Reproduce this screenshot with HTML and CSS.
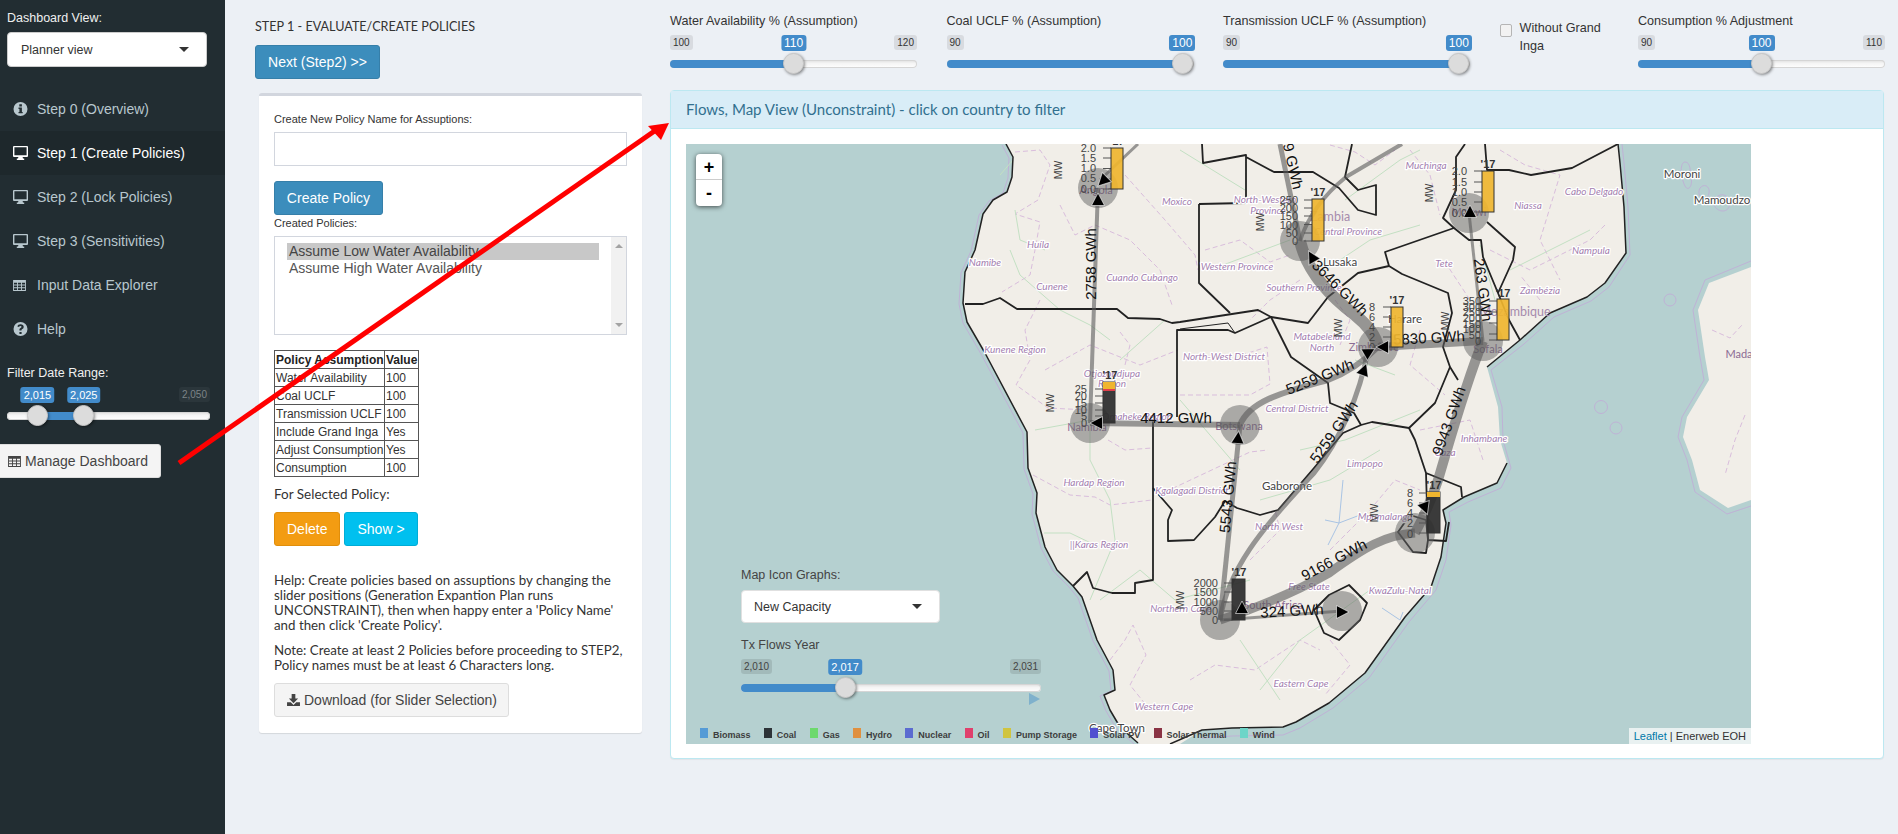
FILE: index.html
```html
<!DOCTYPE html>
<html lang="en">
<head>
<meta charset="utf-8">
<title>Dashboard</title>
<link rel="stylesheet" href="styles.css">
</head>
<body>
<div class="app">
  <aside class="sidebar">
    <div class="side-label first">Dashboard View:</div>
    <div class="select side-select"><span>Planner view</span><i class="caret"></i></div>
    <nav class="menu">
      <a class="item"><svg class="ico" viewBox="0 0 14 14"><path fill-rule="evenodd" d="M7 0a7 7 0 110 14A7 7 0 017 0zM5.800 2.200v2.200h2.600V2.200zM5 5.600v1.300h.9v3H5v1.300h4.200v-1.300h-.8V5.600z"/></svg>Step 0 (Overview)</a>
      <a class="item active"><svg class="ico" viewBox="0 0 15 14"><path fill-rule="evenodd" d="M1 0h13a1 1 0 011 1v9a1 1 0 01-1 1H9.600l.4 1.600h1.200V14H3.800v-1.400H5l.4-1.600H1a1 1 0 01-1-1V1a1 1 0 011-1zm.4 1.300v7.900h12.200V1.300z"/></svg>Step 1 (Create Policies)</a>
      <a class="item"><svg class="ico" viewBox="0 0 15 14"><path fill-rule="evenodd" d="M1 0h13a1 1 0 011 1v9a1 1 0 01-1 1H9.600l.4 1.600h1.200V14H3.800v-1.400H5l.4-1.600H1a1 1 0 01-1-1V1a1 1 0 011-1zm.4 1.300v7.900h12.200V1.300z"/></svg>Step 2 (Lock Policies)</a>
      <a class="item"><svg class="ico" viewBox="0 0 15 14"><path fill-rule="evenodd" d="M1 0h13a1 1 0 011 1v9a1 1 0 01-1 1H9.600l.4 1.600h1.200V14H3.800v-1.400H5l.4-1.600H1a1 1 0 01-1-1V1a1 1 0 011-1zm.4 1.300v7.900h12.200V1.300z"/></svg>Step 3 (Sensitivities)</a>
      <a class="item"><svg class="ico tbl" viewBox="0 0 14 12"><path fill-rule="evenodd" d="M0 0h14v12H0zM1 3v2h3.300V3zm4.300 0v2h3.400V3zm4.400 0v2H13V3zM1 6v2h3.300V6zm4.300 0v2h3.400V6zm4.400 0v2H13V6zM1 9v2h3.300V9zm4.300 0v2h3.400V9zm4.400 0v2H13V9z"/></svg>Input Data Explorer</a>
      <a class="item"><svg class="ico" viewBox="0 0 14 14"><path fill-rule="evenodd" d="M7 0a7 7 0 110 14A7 7 0 017 0zM5.900 10.100v1.900h2.200v-1.900zM7 2.200c-1.700 0-2.800.8-3.100 2.200l1.600.6c.2-.7.700-1.100 1.400-1.100.7 0 1.100.3 1.100.8 0 .5-.4.800-1 1.200-.8.5-1.100 1-1.100 2v.7h2.100v-.4c0-.5.2-.7.800-1.100.9-.6 1.400-1.300 1.400-2.400 0-1.500-1.200-2.500-3.200-2.500z"/></svg>Help</a>
    </nav>
    <div class="side-label range">Filter Date Range:</div>
    <div class="sl sl-side">
      <span class="chip max dark">2,050</span>
      <span class="chip val mid" style="left:15%">2,015</span>
      <span class="chip val mid" style="left:37.800%">2,025</span>
      <div class="track"><div class="fill" style="left:15%;width:22.800%"></div></div>
      <span class="thumb" style="left:15%"></span>
      <span class="thumb" style="left:37.800%"></span>
    </div>
    <button class="btn btn-default manage"><svg class="btn-ico" viewBox="0 0 14 12"><path fill-rule="evenodd" d="M0 0h14v12H0zM1 3v2h3.300V3zm4.300 0v2h3.400V3zm4.400 0v2H13V3zM1 6v2h3.300V6zm4.300 0v2h3.400V6zm4.400 0v2H13V6zM1 9v2h3.300V9zm4.300 0v2h3.400V9zm4.400 0v2H13V9z"/></svg>Manage Dashboard</button>
  </aside>

  <main class="main">
    <section class="left-col">
      <h4 class="step">STEP 1 - EVALUATE/CREATE POLICIES</h4>
      <button class="btn btn-primary next">Next (Step2) &gt;&gt;</button>
      <div class="panel">
        <label class="small-label">Create New Policy Name for Assuptions:</label>
        <div class="input"></div>
        <button class="btn btn-primary create">Create Policy</button>
        <label class="small-label">Created Policies:</label>
        <div class="listbox">
          <div class="options">
            <div class="opt selected">Assume Low Water Availability</div>
            <div class="opt">Assume High Water Availability</div>
          </div>
          <div class="scrollbar"><i class="up"></i><i class="down"></i></div>
        </div>
        <table class="policy">
          <tr><th>Policy Assumption</th><th>Value</th></tr>
          <tr><td>Water Availability</td><td>100</td></tr>
          <tr><td>Coal UCLF</td><td>100</td></tr>
          <tr><td>Transmission UCLF</td><td>100</td></tr>
          <tr><td>Include Grand Inga</td><td>Yes</td></tr>
          <tr><td>Adjust Consumption</td><td>Yes</td></tr>
          <tr><td>Consumption</td><td>100</td></tr>
        </table>
        <div class="for-selected">For Selected Policy:</div>
        <div class="actions">
          <button class="btn btn-warning">Delete</button>
          <button class="btn btn-info">Show &gt;</button>
        </div>
        <p class="help first-help">Help: Create policies based on assuptions by changing the slider positions (Generation Expantion Plan runs UNCONSTRAINT), then when happy enter a 'Policy Name' and then click 'Create Policy'.</p>
        <p class="help">Note: Create at least 2 Policies before proceeding to STEP2, Policy names must be at least 6 Characters long.</p>
        <button class="btn btn-default download"><svg class="btn-ico dl" viewBox="0 0 14 13"><path d="M5 0h4v5h3L7 10 2 5h3z"/><path d="M0 9h4l3 3 3-3h4v4H0z"/></svg>Download (for Slider Selection)</button>
      </div>
    </section>

    <section class="right-col">
      <div class="controls">
        <div class="ctl">
          <div class="ctl-label">Water Availability % (Assumption)</div>
          <div class="sl sl-top">
            <span class="chip min">100</span><span class="chip max">120</span>
            <span class="chip val mid" style="left:50%">110</span>
            <div class="track"><div class="fill" style="left:0;width:50%"></div></div>
            <span class="thumb" style="left:50%"></span>
          </div>
        </div>
        <div class="ctl">
          <div class="ctl-label">Coal UCLF % (Assumption)</div>
          <div class="sl sl-top">
            <span class="chip min">90</span>
            <span class="chip val mid" style="left:95.500%">100</span>
            <div class="track"><div class="fill" style="left:0;width:95.500%"></div></div>
            <span class="thumb" style="left:95.500%"></span>
          </div>
        </div>
        <div class="ctl">
          <div class="ctl-label">Transmission UCLF % (Assumption)</div>
          <div class="sl sl-top">
            <span class="chip min">90</span>
            <span class="chip val mid" style="left:95.500%">100</span>
            <div class="track"><div class="fill" style="left:0;width:95.500%"></div></div>
            <span class="thumb" style="left:95.500%"></span>
          </div>
        </div>
        <div class="check"><i class="box"></i><span>Without Grand Inga</span></div>
        <div class="ctl">
          <div class="ctl-label">Consumption % Adjustment</div>
          <div class="sl sl-top">
            <span class="chip min">90</span><span class="chip max">110</span>
            <span class="chip val mid" style="left:50%">100</span>
            <div class="track"><div class="fill" style="left:0;width:50%"></div></div>
            <span class="thumb" style="left:50%"></span>
          </div>
        </div>
      </div>

      <div class="box-panel">
        <div class="box-head">Flows, Map View (Unconstraint) - click on country to filter</div>
        <div class="box-body">
          <div class="map">
            <svg class="map-svg" viewBox="686 144 1065 600" width="1065" height="600">
              <defs>
                <polygon id="ar" points="0,-7 6.500,5.500 -6.500,5.500"/>
              </defs>
              <rect class="sea" x="686" y="144" width="1065" height="600"/>
              <g class="coast-halo">
                <path d="M1006 144L1013 157 1012 177 1007 192 993 200 983 214 975 250 965 272 963 303 967 322 985 353 1027 432 1028 468 1037 493 1036 513 1045 547 1057 570 1073 586 1082 597 1097 640 1113 670 1115 690 1104 695 1110 710 1120 727 1138 743"/>
                <path d="M1202 738L1232 736 1283 735 1300 728 1333 708 1369 678 1409 622 1436 590 1446 560 1451 525 1449 512 1468 502 1501 488 1511 468 1503 440 1502 407 1491 370 1524 344 1554 317 1591 301 1609 287 1630 255 1628 207 1624 163 1622 144"/>
              </g>
              <path class="land" d="M1006 144L1013 157 1012 177 1007 192 993 200 983 214 975 250 965 272 963 303 967 322 985 353 1027 432 1028 468 1037 493 1036 513 1045 547 1057 570 1073 586 1082 597 1097 640 1113 670 1115 690 1104 695 1110 710 1120 727 1138 743 1140 744H1180L1202 730 1232 728 1283 727 1296 722 1329 703 1365 673 1405 617 1431 587 1441 557 1446 523 1443 510 1464 497 1497 483 1507 463 1500 440 1498 407 1487 367 1520 340 1550 313 1587 297 1605 283 1626 253 1624 207 1620 163 1618 144z"/>
              <path class="mada-halo" d="M1751 261L1705 280 1693 310 1700 357 1704 380 1682 417 1678 437 1687 460 1695 492 1727 514 1751 506"/>
              <path class="land" d="M1751 267L1709 283 1698 310 1705 357 1709 380 1687 417 1683 437 1692 460 1700 490 1728 508 1751 500z"/>
              <g class="islands">
                <circle cx="1670" cy="300" r="6"/><circle cx="1601" cy="407" r="6.500"/><circle cx="1616" cy="428" r="6"/>
                <path d="M1685 162c-5 0-5 14 0 24 3 6 8 0 6-8-1-6 0-16-6-16zM1700 188c5-6 12 0 8 8-4 6-12 0-8-8zM1718 196c6-4 14 2 11 11-3 7-14 4-15-3 0-4 1-6 4-8z"/>
              </g>
              <g class="admin">
                <path d="M1015 152L1040 150 1050 165 1038 200 1015 214 1040 222 1035 250 1030 275 1002 292"/>
                <path d="M1060 205L1075 235 1095 225 1130 240 1160 270 1172 305"/>
                <path d="M1125 175L1165 220 1195 255 1198 270"/>
                <path d="M1040 300L1025 330 1030 360 1016 385 1048 408 1088 410"/>
                <path d="M1045 370L1090 345 1140 365 1178 350M1120 332L1130 345 1125 365"/>
                <path d="M1033 475L1070 495 1095 497 1110 505 1152 500M1108 440L1125 450 1152 448"/>
                <path d="M1180 395H1250L1270 384 1267 347 1245 354M1165 492L1250 452 1268 450"/>
                <path d="M1110 660L1125 640 1133 625 1146 655 1130 685 1150 710M1190 680L1215 665 1255 670 1300 640 1320 650"/>
                <path d="M1250 560L1280 530 1275 510M1330 550L1370 510 1395 480 1420 490M1330 640L1350 665 1325 695"/>
                <path d="M1205 250L1240 240 1270 262 1290 255M1330 145L1355 152 1375 165 1395 150M1300 280L1270 300 1250 320"/>
                <path d="M1410 150L1430 175 1440 215M1500 150L1525 165 1560 175 1540 240 1560 280M1490 250L1530 270 1590 240 1605 225M1540 300L1520 275M1445 262L1470 300"/>
                <path d="M1420 330L1410 365 1445 395M1335 300L1350 320 1340 345M1420 430L1470 420 1483 460"/>
                <path d="M1745 415L1735 440 1725 475M1712 330L1730 338 1742 325"/>
              </g>
              <g class="rivers">
                <path d="M1013 160L1000 175M1015 210L1020 240 1045 250M1010 250L1020 275 1060 310 1090 325 1110 340"/>
                <path d="M1035 430L1090 420 1090 460 1110 500 1115 540 1090 600M1120 360L1165 320"/>
                <path d="M1180 400L1240 470M1100 600L1140 570 1175 600 1250 580M1044 533H1070L1095 545"/>
                <path d="M1240 640L1280 700M1370 590L1300 640 1260 690M1260 500L1330 480 1380 450"/>
                <path d="M1345 200L1400 160 1420 150M1215 268L1290 240M1340 260L1370 240 1420 225M1480 245L1495 300"/>
                <path d="M1510 270L1590 230M1180 150L1245 190M1300 450L1345 440 1420 410M1355 360L1395 375"/>
              </g>
              <path class="water" d="M1343 480L1339 523 1328 545M1339 523L1360 515M1339 523L1325 520M1382 608L1400 620 1403 612"/>
              <g class="borders">
                <path class="coastline" d="M1006 144L1013 157 1012 177 1007 192 993 200 983 214 975 250 965 272 963 303 967 322 985 353 1027 432 1028 468 1037 493 1036 513 1045 547 1057 570 1073 586 1082 597 1097 640 1113 670 1115 690 1104 695 1110 710 1120 727 1138 743"/>
                <path class="coastline" d="M1170 744L1202 730 1232 728 1283 727 1296 722 1329 703 1365 673 1405 617 1431 587 1441 557 1446 523 1443 510 1464 497 1497 483 1507 463M1487 367L1520 340 1550 313 1587 297 1605 283 1626 253 1624 207 1620 163 1618 144"/>
                <path d="M965 304L983 304 1000 298 1017 309H1117L1128 318 1160 319 1172 323 1180 322 1258 310 1271 317 1308 323 1328 297 1358 273 1389 266"/>
                <path d="M1153 417V580L1135 583V593L1112 593 1093 588 1087 572 1073 586"/>
                <path d="M1177 417V330H1228L1235 333 1271 317 1291 357 1328 383 1330 403 1354 413 1361 425 1372 422 1409 428 1435 403 1450 367 1443 347 1452 313 1448 293 1402 274 1389 266 1385 252 1454 228 1443 218 1456 190 1456 157 1465 144"/>
                <path d="M1153 488L1172 510 1168 520 1168 541 1194 540 1215 517 1225 501 1237 508 1260 515 1278 510 1314 468 1343 433 1361 425"/>
                <path d="M1409 428L1415 440 1426 473 1461 487 1462 497M1426 473L1428 540 1446 541 1449 522"/>
                <path d="M1410 515L1398 532 1413 552 1426 553 1428 540 1426 520z"/>
                <path d="M1349 585L1367 603 1360 620 1339 640 1324 633 1314 610 1329 595z"/>
                <path d="M1199 204L1246 203V155L1203 163 1202 144M1199 204V283L1230 313M1246 157L1274 172H1313L1339 188 1358 210 1376 215V185L1358 190 1345 177 1352 144"/>
                <path d="M1485 144L1487 170H1509L1531 175 1572 168 1618 144"/>
                <path d="M1454 228L1469 240H1481L1483 257 1498 293 1509 320 1520 340M1487 222L1515 247 1513 260 1498 293M1450 367L1458 380"/>
                <path class="thin" d="M1409 428L1435 403M1180 329L1228 323 1235 333"/>
              </g>
              <g class="labels">
                <text class="r" x="1038" y="248">Huíla</text><text class="r" x="985" y="266">Namibe</text>
                <text class="r" x="1052" y="290">Cunene</text><text class="r" x="1142" y="281">Cuando Cubango</text>
                <text class="r" x="1177" y="205">Moxico</text><text class="r" x="1015" y="353">Kunene Region</text>
                <text class="r" x="1112" y="377">Otjozondjupa</text><text class="r" x="1112" y="387">Region</text>
                <text class="r" x="1137" y="420">Omaheke Region</text><text class="r" x="1094" y="486">Hardap Region</text>
                <text class="r" x="1099" y="548">||Karas Region</text><text class="r" x="1181" y="612">Northern Cape</text>
                <text class="r" x="1164" y="710">Western Cape</text><text class="r" x="1301" y="687">Eastern Cape</text>
                <text class="r" x="1309" y="590">Free State</text><text class="r" x="1400" y="594">KwaZulu-Natal</text>
                <text class="r" x="1385" y="520">Mpumalanga</text><text class="r" x="1279" y="530">North West</text>
                <text class="r" x="1192" y="494">Kgalagadi District</text><text class="r" x="1365" y="467">Limpopo</text>
                <text class="r" x="1445" y="456">Gaza</text><text class="r" x="1484" y="442">Inhambane</text>
                <text class="r" x="1297" y="412">Central District</text><text class="r" x="1224" y="360">North-West District</text>
                <text class="r" x="1322" y="340">Matabeleland</text><text class="r" x="1322" y="351">North</text>
                <text class="r" x="1304" y="291">Southern Province</text><text class="r" x="1237" y="270">Western Province</text>
                <text class="r" x="1265" y="203">North-Western</text><text class="r" x="1268" y="214">Province</text>
                <text class="r" x="1348" y="235">Central Province</text><text class="r" x="1426" y="169">Muchinga</text>
                <text class="r" x="1444" y="267">Tete</text><text class="r" x="1528" y="209">Niassa</text>
                <text class="r" x="1594" y="195">Cabo Delgado</text><text class="r" x="1591" y="254">Nampula</text>
                <text class="r" x="1540" y="294">Zambézia</text>
                <text class="c" x="1096" y="194">Angola</text><text class="c" x="1087" y="431">Namibia</text>
                <text class="c big" x="1330" y="221">Zambia</text><text class="c" x="1469" y="216">Malawi</text>
                <text class="c big" x="1515" y="316">Mozambique</text><text class="c" x="1488" y="353">Sofala</text>
                <text class="c" x="1374" y="351">Zimbabwe</text><text class="c" x="1239" y="430">Botswana</text>
                <text class="c" x="1273" y="609">South Africa</text><text class="c" x="1739" y="358">Mada</text>
                <text class="t" x="1340" y="266">Lusaka</text><text class="t" x="1405" y="323">Harare</text>
                <text class="t" x="1287" y="490">Gaborone</text><text class="t" x="1117" y="732">Cape Town</text>
                <text class="t" x="1682" y="178">Moroni</text><text class="t" x="1722" y="204">Mamoudzo</text>
              </g>
              <g class="nodes">
                <circle cx="1098" cy="188" r="20"/><circle cx="1090" cy="423" r="20"/><circle cx="1300" cy="241" r="20"/>
                <circle cx="1469" cy="213" r="20"/><circle cx="1378" cy="347" r="20"/><circle cx="1483" cy="341" r="20"/>
                <circle cx="1240" cy="425" r="20"/><circle cx="1220" cy="620" r="20"/><circle cx="1342" cy="611" r="20"/>
                <circle cx="1415" cy="533" r="20"/>
              </g>
              <g class="flows">
                <path class="w4" d="M1098 188L1090 423"/>
                <path class="w3" d="M1100 180L1138 144"/>
                <path class="w5" d="M1280 144L1300 241"/>
                <path class="w4" d="M1300 241C1310 210 1330 190 1346 177L1402 144"/>
                <path class="w12" d="M1300 241C1308 275 1335 300 1355 315 1370 327 1376 337 1378 347"/>
                <path class="w8" d="M1378 347L1483 341"/>
                <path class="w6" d="M1240 425C1250 400 1285 392 1328 380 1350 372 1365 360 1378 347"/>
                <path class="w6" d="M1090 423L1240 425"/>
                <path class="w5" d="M1220 620C1228 570 1260 530 1314 473 1340 440 1360 395 1368 350"/>
                <path class="w5" d="M1220 620L1240 425"/>
                <path class="w3" d="M1220 620L1342 611"/>
                <path class="w9" d="M1220 620C1250 610 1290 595 1329 573 1365 547 1385 535 1415 533"/>
                <path class="w10" d="M1483 341C1465 385 1450 440 1438 480 1430 505 1422 520 1415 533"/>
                <path class="w3" d="M1469 213L1483 341"/>
              </g>
              <g class="flow-labels">
                <text transform="translate(1091 264) rotate(-90)" y="5">2758 GWh</text>
                <text transform="translate(1290 154) rotate(77)" y="5">1649 GWh</text>
                <text transform="translate(1340 288) rotate(45)" y="5">3646 GWh</text>
                <text transform="translate(1429 338) rotate(-3)" y="5">5830 GWh</text>
                <text transform="translate(1176 418)" y="5">4412 GWh</text>
                <text transform="translate(1320 377) rotate(-22)" y="5">5259 GWh</text>
                <text transform="translate(1334 432) rotate(-55)" y="5">5259 GWh</text>
                <text transform="translate(1228 497) rotate(-85)" y="5">5543 GWh</text>
                <text transform="translate(1292 611) rotate(-3)" y="5">324 GWh</text>
                <text transform="translate(1334 560) rotate(-28)" y="5">9166 GWh</text>
                <text transform="translate(1449 421) rotate(-70)" y="5">9943 GWh</text>
                <text transform="translate(1483 290) rotate(82)" y="5">263 GWh</text>
              </g>
              <g class="charts">
                <g transform="translate(1111 189)">
                  <path class="tick" d="M-8 -41H0M-8 -31H0M-8 -20.500H0M-8 -10H0M-8 0H0"/>
                  <rect class="bar yellow" x="0" y="-41" width="12" height="41"/>
                  <text class="tk" x="-15" y="-37">2.0</text><text class="tk" x="-15" y="-27">1.5</text><text class="tk" x="-15" y="-17">1.0</text><text class="tk" x="-15" y="-7">0.5</text><text class="tk" x="-15" y="4">0.0</text>
                  <text class="mw" transform="translate(-49 -19) rotate(-90)">MW</text>
                  <text class="yr" x="6" y="-44">'17</text>
                </g>
                <g transform="translate(1312 241)">
                  <path class="tick" d="M-8 -41H0M-8 -33H0M-8 -25H0M-8 -16.500H0M-8 -8H0M-8 0H0"/>
                  <rect class="bar yellow" x="0" y="-42" width="12" height="42"/>
                  <text class="tk" x="-14" y="-37">250</text><text class="tk" x="-14" y="-29">200</text><text class="tk" x="-14" y="-21">150</text><text class="tk" x="-14" y="-12.500">100</text><text class="tk" x="-14" y="-4">50</text><text class="tk" x="-14" y="4">0</text>
                  <text class="mw" transform="translate(-48 -19) rotate(-90)">MW</text>
                  <text class="yr" x="6" y="-45">'17</text>
                </g>
                <g transform="translate(1482 212)">
                  <path class="tick" d="M-8 -41H0M-8 -30H0M-8 -20H0M-8 -10H0M-8 0H0"/>
                  <rect class="bar yellow" x="0" y="-41" width="12" height="41"/>
                  <text class="tk" x="-15" y="-37">2.0</text><text class="tk" x="-15" y="-26">1.5</text><text class="tk" x="-15" y="-16">1.0</text><text class="tk" x="-15" y="-6">0.5</text><text class="tk" x="-15" y="5">0.0</text>
                  <text class="mw" transform="translate(-49 -19) rotate(-90)">MW</text>
                  <text class="yr" x="6" y="-44">'17</text>
                </g>
                <g transform="translate(1391 347)">
                  <path class="tick" d="M-8 -40H0M-8 -30H0M-8 -20H0M-8 -10H0M-8 0H0"/>
                  <rect class="bar yellow" x="0" y="-40" width="12" height="40"/>
                  <text class="tk" x="-16" y="-36">8</text><text class="tk" x="-16" y="-26">6</text><text class="tk" x="-16" y="-16">4</text><text class="tk" x="-16" y="-6">2</text><text class="tk" x="-16" y="4">0</text>
                  <text class="mw" transform="translate(-49 -19) rotate(-90)">MW</text>
                  <text class="yr" x="6" y="-43">'17</text>
                </g>
                <g transform="translate(1497 340)">
                  <path class="tick" d="M-8 -39H0M-8 -28H0M-8 -17H0M-8 -6H0M-8 0H0"/>
                  <rect class="bar yellow" x="0" y="-41" width="12" height="41"/>
                  <text class="tk" x="-16" y="-35">350</text><text class="tk" x="-16" y="-29">300</text><text class="tk" x="-16" y="-24">250</text><text class="tk" x="-16" y="-18">200</text><text class="tk" x="-16" y="-12">150</text><text class="tk" x="-16" y="-7">100</text><text class="tk" x="-16" y="-1">50</text><text class="tk" x="-16" y="5">0</text>
                  <text class="mw" transform="translate(-48 -19) rotate(-90)">MW</text>
                  <text class="yr" x="6" y="-43">'17</text>
                </g>
                <g transform="translate(1103 423)">
                  <path class="tick" d="M-8 -34H0M-8 -27H0M-8 -20H0M-8 -13H0M-8 -7H0M-8 0H0"/>
                  <rect class="bar black" x="0" y="-41" width="12" height="41"/>
                  <rect class="seg-y" x="0" y="-41" width="12" height="7"/>
                  <rect class="seg-r" x="0" y="-34" width="12" height="2"/>
                  <text class="tk" x="-16" y="-30">25</text><text class="tk" x="-16" y="-23">20</text><text class="tk" x="-16" y="-16">15</text><text class="tk" x="-16" y="-9">10</text><text class="tk" x="-16" y="-3">5</text><text class="tk" x="-16" y="4">0</text>
                  <text class="mw" transform="translate(-49 -20) rotate(-90)">MW</text>
                  <text class="yr" x="7" y="-44">'17</text>
                </g>
                <g transform="translate(1232 620)">
                  <path class="tick" d="M-8 -37H0M-8 -28H0M-8 -18H0M-8 -9H0M-8 0H0"/>
                  <rect class="bar black" x="0" y="-41" width="13" height="41"/>
                  <text class="tk" x="-14" y="-33">2000</text><text class="tk" x="-14" y="-24">1500</text><text class="tk" x="-14" y="-14">1000</text><text class="tk" x="-14" y="-5">500</text><text class="tk" x="-14" y="4">0</text>
                  <text class="mw" transform="translate(-48 -20) rotate(-90)">MW</text>
                  <text class="yr" x="7" y="-44">'17</text>
                </g>
                <g transform="translate(1427 533)">
                  <path class="tick" d="M-8 -40H0M-8 -30H0M-8 -20H0M-8 -10H0M-8 0H0"/>
                  <rect class="bar black" x="0" y="-41" width="13" height="41"/>
                  <rect class="seg-y" x="0" y="-41" width="13" height="5"/>
                  <text class="tk" x="-14" y="-36">8</text><text class="tk" x="-14" y="-26">6</text><text class="tk" x="-14" y="-16">4</text><text class="tk" x="-14" y="-6">2</text><text class="tk" x="-14" y="5">0</text>
                  <text class="mw" transform="translate(-49 -20) rotate(-90)">MW</text>
                  <text class="yr" x="7" y="-44">'17</text>
                </g>
              </g>
              <g class="arrows">
                <use href="#ar" transform="translate(1098 200)"/>
                <use href="#ar" transform="translate(1103 181) rotate(225)"/>
                <use href="#ar" transform="translate(1097 423) rotate(-90)"/>
                <use href="#ar" transform="translate(1312 257) rotate(-30)"/>
                <use href="#ar" transform="translate(1470 212)"/>
                <use href="#ar" transform="translate(1369 352) rotate(60)"/>
                <use href="#ar" transform="translate(1383 347) rotate(-90)"/>
                <use href="#ar" transform="translate(1364 370) rotate(20)"/>
                <use href="#ar" transform="translate(1238 438) rotate(5)"/>
                <use href="#ar" transform="translate(1242 608)"/>
                <use href="#ar" transform="translate(1342 612) rotate(90)"/>
                <use href="#ar" transform="translate(1425 508) rotate(160)"/>
              </g>
            </svg>

            <div class="zoom-ctl"><a class="zoom-btn">+</a><a class="zoom-btn">-</a></div>

            <div class="map-panel">
              <div class="over-label">Map Icon Graphs:</div>
              <div class="select map-select"><span>New Capacity</span><i class="caret"></i></div>
              <div class="over-label tx">Tx Flows Year</div>
              <div class="sl sl-over">
                <span class="chip min">2,010</span><span class="chip max">2,031</span>
                <span class="chip val mid" style="left:34.700%">2,017</span>
                <div class="track"><div class="fill" style="left:0;width:34.700%"></div></div>
                <span class="thumb" style="left:34.700%"></span>
                <i class="play"></i>
              </div>
            </div>

            <div class="legend">
              <span class="lg"><i class="sw s-biomass"></i>Biomass</span>
              <span class="lg"><i class="sw s-coal"></i>Coal</span>
              <span class="lg"><i class="sw s-gas"></i>Gas</span>
              <span class="lg"><i class="sw s-hydro"></i>Hydro</span>
              <span class="lg"><i class="sw s-nuclear"></i>Nuclear</span>
              <span class="lg"><i class="sw s-oil"></i>Oil</span>
              <span class="lg"><i class="sw s-pump"></i>Pump Storage</span>
              <span class="lg"><i class="sw s-pv"></i>Solar PV</span>
              <span class="lg"><i class="sw s-thermal"></i>Solar Thermal</span>
              <span class="lg"><i class="sw s-wind"></i>Wind</span>
            </div>

            <div class="attribution"><a class="leaflet">Leaflet</a> | Enerweb EOH</div>
          </div>
        </div>
      </div>
    </section>
  </main>

  <svg class="red-arrow" viewBox="0 0 1898 834" width="1898" height="834">
    <path class="red-line" d="M179 463L656 130"/>
    <polygon class="red-head" points="669,123 648,126 661,140"/>
  </svg>
</div>
</body>
</html>
```

FILE: styles.css
```css
* { box-sizing: border-box; }
html, body { margin: 0; height: 100%; overflow: hidden; }
body { font-family: "Liberation Sans", Arial, sans-serif; font-size: 14px; color: #333; background: #ecf0f5; }
.app { position: relative; display: flex; height: 834px; }
.red-arrow { position: absolute; left: 0; top: 0; pointer-events: none; }
.red-line { stroke: #f00; stroke-width: 5; fill: none; }
.red-head { fill: #f00; }

.sidebar { width: 225px; flex: none; background: #222d32; overflow: hidden; padding-top: 10px; }
.side-label { font-size: 12.500px; line-height: 16px; color: #f0f0f0; padding-left: 7px; }
.select { display: flex; align-items: center; justify-content: space-between; background: #fff; border: 1px solid #ccc; border-radius: 4px; font-size: 12.500px; color: #333; }
.side-select { width: 200px; height: 35px; margin: 6px 0 0 7px; padding: 0 17px 0 13px; }
.caret { width: 0; height: 0; border-left: 5px solid transparent; border-right: 5px solid transparent; border-top: 5px solid #333; }
.menu { margin-top: 20px; display: flex; flex-direction: column; }
.item { display: flex; align-items: center; height: 44px; padding-left: 13px; color: #b8c7ce; font-size: 14px; }
.item.active { background: #1e282c; color: #fff; }
.ico { width: 15px; height: 14px; margin-right: 9px; fill: currentColor; flex: none; }
.ico.tbl { width: 13px; height: 11px; margin-right: 11px; }
.range { margin-top: 14px; }

.sl { position: relative; height: 42px; }
.track { position: absolute; left: 0; right: 0; top: 25px; height: 8px; border-radius: 4px; background: linear-gradient(#ddd, #f4f4f4 40%, #fff); box-shadow: inset 0 0 0 1px #d5d5d5; }
.fill { position: absolute; top: 0; bottom: 0; background: #428bca; border-radius: 4px; }
.thumb { position: absolute; top: 18px; width: 21px; height: 21px; margin-left: -10.500px; border-radius: 50%; background: #dcdcdc; border: 1px solid #c8c8c8; box-shadow: 1px 1px 3px rgba(0, 0, 0, .45); }
.chip { position: absolute; top: 0; font-size: 10px; line-height: 15px; padding: 0 3px; border-radius: 3px; background: #d8dbe0; color: #333; white-space: nowrap; }
.chip.min { left: 0; }
.chip.max { right: 0; }
.chip.val { background: #428bca; color: #fff; font-size: 12px; line-height: 16px; }
.chip.mid { transform: translateX(-50%); }
.sl-side { width: 203px; margin: 6px 0 0 7px; }
.sl-side .chip.val, .sl-over .chip.val { font-size: 11px; }
.chip.dark { background: #2b363b; color: #7c8488; }
.btn { display: inline-block; height: 34px; padding: 0 12px; border: 1px solid transparent; border-radius: 3px; font-family: inherit; font-size: 14px; line-height: 32px; white-space: nowrap; }
.btn-primary { background: #3c8dbc; border-color: #367fa9; color: #fff; }
.btn-default { background: #f4f4f4; border-color: #ddd; color: #444; }
.btn-warning { background: #f39c12; border-color: #e08e0b; color: #fff; }
.btn-info { background: #00c0ef; border-color: #00acd6; color: #fff; }
.btn-ico { width: 13px; height: 11px; margin-right: 4px; fill: #444; vertical-align: -1px; }
.btn-ico.dl { height: 12px; }
.manage { display: block; margin: 15px 0 0 -6px; width: 167px; padding-left: 13px; text-align: left; }

.main { flex: 1; display: flex; padding-left: 30px; }
.left-col { width: 387px; flex: none; padding-top: 19px; }
.step { margin: 0; font-family: Lato, "Noto Sans", sans-serif; font-weight: 400; font-size: 12.600px; line-height: 16px; color: #333; }
.next { display: block; margin-top: 10px; width: 125px; padding: 0; }
.panel { margin: 14px 0 0 4px; width: 383px; height: 640px; background: #fff; border-top: 3px solid #d2d6de; border-radius: 3px; box-shadow: 0 1px 1px rgba(0, 0, 0, .1); padding: 15px 15px 0; }
.small-label { display: block; font-size: 11px; line-height: 16px; color: #333; }
.input { height: 34px; margin-top: 5px; width: 353px; border: 1px solid #d2d6de; background: #fff; }
.create { display: block; margin-top: 15px; width: 109px; padding: 0; }
.listbox { display: flex; justify-content: space-between; width: 353px; height: 99px; margin-top: 5px; border: 1px solid #d2d6de; }
.options { padding: 6px 0 0 12px; }
.opt { width: 312px; height: 17px; line-height: 17px; padding-left: 2px; font-size: 14px; color: #555; }
.opt.selected { background: #c8c8c8; color: #444; }
.scrollbar { width: 15px; background: #f1f1f1; display: flex; flex-direction: column; justify-content: space-between; align-items: center; padding: 7px 0; }
.scrollbar i { width: 0; height: 0; border-left: 4px solid transparent; border-right: 4px solid transparent; }
.scrollbar .up { border-bottom: 4px solid #a3a3a3; }
.scrollbar .down { border-top: 4px solid #a3a3a3; }
.policy { margin-top: 15px; border-collapse: collapse; border: 1.500px solid #333; font-size: 12px; color: #333; table-layout: fixed; width: 145px; }
.policy th, .policy td { border: 1px solid #555; height: 18px; padding: 0 1px; text-align: left; white-space: nowrap; line-height: 16px; }
.policy th:first-child, .policy td:first-child { width: 110px; }
.policy th { color: #222; }
.for-selected { margin-top: 7px; font-family: Lato, "Noto Sans", sans-serif; font-size: 13.500px; line-height: 20px; color: #333; }
.actions { display: flex; gap: 4px; margin-top: 8px; }
.actions .btn { padding: 0 12px; }
.help { margin: 10px 0 0; width: 353px; font-family: Lato, "Noto Sans", sans-serif; font-size: 13.300px; line-height: 15px; color: #333; }
.first-help { margin-top: 27px; }
.download { display: block; margin-top: 10px; width: 235px; }

.right-col { width: 1214px; margin-left: 28px; flex: none; padding-top: 13px; }
.controls { display: grid; grid-template-columns: 247px 247px 247px 109px 247px; column-gap: 29.500px; height: 77px; }
.ctl-label { font-size: 12.600px; line-height: 16px; color: #333; white-space: nowrap; }
.sl-top { margin-top: 6px; }
.check { display: flex; gap: 8px; padding-top: 6px; font-size: 12.600px; line-height: 18px; color: #333; }
.box { flex: none; width: 12px; height: 13px; margin-top: 5px; border: 1px solid #b5b5b5; border-radius: 2px; background: #f2f2f2; }

.box-panel { height: 669px; background: #fff; border: 1px solid #bce8f1; border-radius: 4px; box-shadow: 0 1px 1px rgba(0, 0, 0, .05); }
.box-head { height: 38px; background: #d9edf7; border-bottom: 1px solid #bce8f1; padding-left: 15px; font-family: Lato, "Noto Sans", sans-serif; font-size: 15.050px; line-height: 37px; color: #31708f; }
.box-body { padding: 15px; }
.map { position: relative; width: 1065px; height: 600px; overflow: hidden; background: #b5d0d0; }
.map-svg { display: block; }
.sea { fill: #b5d0d0; }
.land { fill: #f1eee8; }
.coast-halo path, .mada-halo { fill: none; stroke: #bfb2d6; stroke-width: 1; }
.coast-halo path:first-child { transform: translate(-4px, 1px); }
.islands { fill: none; stroke: #bfb2d6; stroke-width: 1; }
.admin path { fill: none; stroke: #d9bddc; stroke-width: 1; stroke-dasharray: 5 3; }
.rivers path { fill: none; stroke: #c3e0c3; stroke-width: 1; }
.water { fill: none; stroke: #a9c4e4; stroke-width: 1; }
.borders path { fill: none; stroke: #222; stroke-width: 1.800; stroke-linejoin: round; }
.borders .coastline { stroke-width: 1.500; }
.borders .thin { stroke-width: 1; }
.r, .c, .t { text-anchor: middle; font-family: Lato, "Noto Sans", sans-serif; paint-order: stroke; stroke: #fff; stroke-width: 2.500px; stroke-linejoin: round; }
.r { font-size: 10px; font-style: italic; fill: #a47fb0; }
.c { font-size: 11px; fill: #8b6b94; stroke: none; }
.c.big { font-size: 12.500px; fill: #a68bad; }
.t { font-size: 11.500px; fill: #444; }
.nodes circle { fill: rgba(100, 100, 100, .5); }
.flows path { fill: none; stroke: rgba(90, 90, 90, .6); }
.w3 { stroke-width: 3; }
.w4 { stroke-width: 4; }
.w5 { stroke-width: 5; }
.w6 { stroke-width: 6; }
.w8 { stroke-width: 8; }
.w9 { stroke-width: 9; }
.w10 { stroke-width: 10; }
.w12 { stroke-width: 12; }
.flow-labels text { font-family: "Liberation Sans", Arial, sans-serif; font-size: 15px; fill: #111; text-anchor: middle; }
.tick { fill: none; stroke: #555; stroke-width: 1; }
.bar { stroke: #333; stroke-width: 1; }
.yellow { fill: #efb52f; fill-opacity: .92; }
.black { fill: #2b2b2b; fill-opacity: .92; }
.seg-y { fill: #efb52f; }
.seg-r { fill: #e0404c; }
.tk { font-family: "Liberation Sans", Arial, sans-serif; font-size: 11px; fill: #444; text-anchor: end; }
.mw { font-family: "Liberation Sans", Arial, sans-serif; font-size: 10.500px; fill: #444; text-anchor: middle; }
.yr { font-family: "Liberation Sans", Arial, sans-serif; font-size: 11px; font-weight: 700; fill: #333; text-anchor: middle; }
.arrows use { fill: #000; stroke: rgba(255, 255, 255, .6); stroke-width: 1; }

.zoom-ctl { position: absolute; left: 10px; top: 10px; width: 26px; border-radius: 4px; background: #fff; box-shadow: 0 1px 5px rgba(0, 0, 0, .65); }
.zoom-btn { display: block; height: 26px; text-align: center; font: 700 18px/26px "Liberation Sans", Arial, sans-serif; color: #000; }
.zoom-btn:first-child { border-bottom: 1px solid #ccc; }

.map-panel { position: absolute; left: 55px; top: 423px; width: 300px; }
.over-label { font-size: 12.500px; line-height: 16px; color: #444; }
.map-select { width: 199px; height: 33px; margin-top: 7px; padding: 0 17px 0 12px; border-color: #e0e0e0; }
.tx { margin-top: 14px; }
.sl-over { margin-top: 6px; height: 50px; }
.sl-over .chip { background: rgba(0, 0, 0, .1); color: #444; }
.sl-over .chip.val { background: #428bca; color: #fff; }
.play { position: absolute; right: 1px; top: 34px; width: 0; height: 0; border-left: 11px solid #7fb1cc; border-top: 6.500px solid transparent; border-bottom: 6.500px solid transparent; }

.legend { position: absolute; left: 14px; bottom: 2px; display: flex; gap: 13.300px; }
.lg { display: flex; align-items: flex-start; gap: 5px; font-size: 9px; line-height: 14px; height: 14px; font-weight: 700; color: #3d3d3d; white-space: nowrap; }
.sw { width: 8px; height: 10px; flex: none; }
.s-biomass { background: #559bd6; }
.s-coal { background: #2d3338; }
.s-gas { background: #6dd96d; }
.s-hydro { background: #e0903f; }
.s-nuclear { background: #5b6bd0; }
.s-oil { background: #e0406c; }
.s-pump { background: #d0c43f; }
.s-pv { background: #5050d0; }
.s-thermal { background: #8a3344; }
.s-wind { background: #6dd5c8; }

.attribution { position: absolute; right: 0; bottom: 0; height: 16px; padding: 0 5px; background: rgba(255, 255, 255, .7); font-size: 11px; line-height: 16px; color: #333; }
.leaflet { color: #0078a8; }
```
